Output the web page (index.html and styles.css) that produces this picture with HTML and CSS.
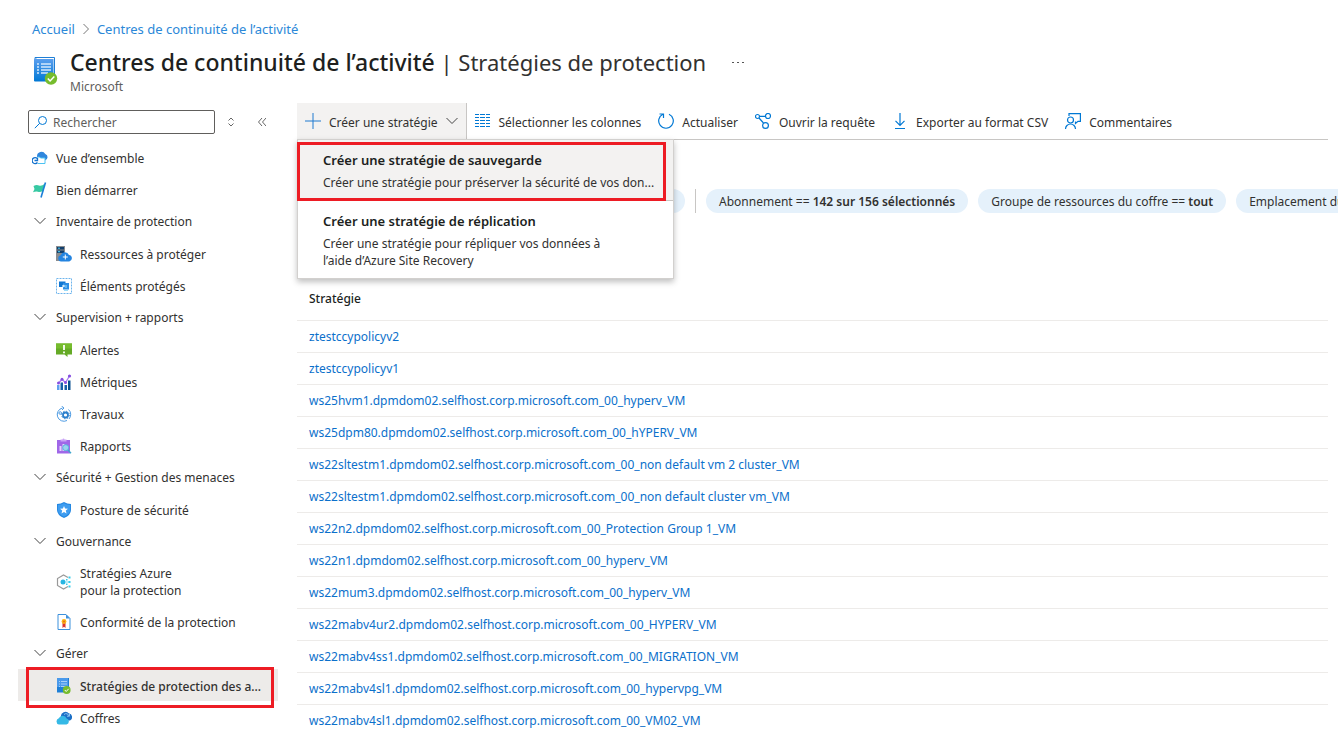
FILE: index.html
```html
<!DOCTYPE html>
<html lang="fr">
<head>
    <meta charset="UTF-8">
    <meta name="viewport" content="width=device-width, initial-scale=1.0">
    <title>Centres de continuité de l’activité</title>
    <link rel="stylesheet" href="styles.css">
</head>
<body>
    <header class="page-header">
        <nav class="breadcrumb" aria-label="Fil d’Ariane">
            <a href="#">Accueil</a>
            <svg class="crumb-arrow" viewBox="0 0 8 12"><path d="M1.500 1l5 5-5 5" fill="none" stroke="#777"/></svg>
            <a href="#">Centres de continuité de l’activité</a>
        </nav>
        <div class="title-row">
            <svg class="title-icon" viewBox="0 0 26 30">
                <defs>
                    <linearGradient id="book" x1="0" y1="0" x2="0" y2="1"><stop offset="0" stop-color="#5ea0ef"/><stop offset="1" stop-color="#0078d4"/></linearGradient>
                </defs>
                <path d="M2 1.500h19.500v23H2z" fill="#fff" stroke="#1f7fd6"/>
                <path d="M1 3.500 3.500 2v1h17v22.500H2a1 1 0 0 1-1-1z" fill="url(#book)"/>
                <path d="M4 8h2M8 8h10M4 11h2M8 11h10M4 14h2M8 14h10M4 17h2M8 17h7" stroke="#d3e8fb" stroke-width="1.300"/>
                <circle cx="18" cy="22.500" r="6.200" fill="#76bc2d"/>
                <path d="m14.800 22.500 2.300 2.500 4.200-4.500" fill="none" stroke="#fff" stroke-width="1.500"/>
            </svg>
            <div class="title-text">
                <h1>Centres de continuité de l’activité<span class="title-sub"> | Stratégies de protection</span></h1>
                <p class="org">Microsoft</p>
            </div>
            <button type="button" class="more-btn" aria-label="Plus d’options">
                <svg viewBox="0 0 12 4"><path d="M0 1.500h2M5 1.500h2M10 1.500h2" stroke="#555"/></svg>
            </button>
        </div>
    </header>

    <div class="layout">
        <aside class="sidebar">
            <div class="search-row">
                <div class="search-box">
                    <svg viewBox="0 0 14 14"><circle cx="8.500" cy="5.500" r="4" fill="none" stroke="#0078d4"/><path d="M5.600 8.400.800 13.200" stroke="#0078d4"/></svg>
                    <input type="text" placeholder="Rechercher" aria-label="Rechercher">
                </div>
                <button type="button" class="icon-btn" aria-label="Tout développer">
                    <svg viewBox="0 0 8 10"><path d="M1.500 3.500 4 1l2.500 2.500M1.500 6.500 4 9l2.500-2.500" fill="none" stroke="#666"/></svg>
                </button>
                <button type="button" class="icon-btn" aria-label="Réduire le menu">
                    <svg viewBox="0 0 8 10"><path d="M4 1 .500 5 4 9M8 1 4.500 5 8 9" fill="none" stroke="#666"/></svg>
                </button>
            </div>

            <nav class="menu" aria-label="Menu">
                <a href="#" class="item">
                    <svg class="icon" viewBox="0 0 16 16"><path d="M5 6.500A4.500 4.500 0 0 1 13.300 4 3.400 3.400 0 0 1 13 10.500H6z" fill="#2f86dd"/><path d="M5.500 7h2l1 1h4.500v5.500H6" fill="#fff" stroke="#4cc3f2"/><path d="M5.300 8.500A3 3 0 1 0 5.500 12.500M2.500 10.500h3V8" fill="none" stroke="#1371cd" stroke-width="1.300"/></svg>
                    <span>Vue d’ensemble</span>
                </a>
                <a href="#" class="item">
                    <svg class="icon" viewBox="0 0 16 16"><path d="M1.500 4q3-1.500 5.500-.500t6-2l-2 7.500q-3 1.500-5 .800-2-.800-5 .500L2.500 7z" fill="#37c9a3"/><path d="M13.500.500 9 15.500" stroke="#1b7fd8" stroke-width="1.600"/></svg>
                    <span>Bien démarrer</span>
                </a>
                <button type="button" class="item group" aria-expanded="true">
                    <svg class="icon" viewBox="0 0 16 16"><path d="m2.500 5 5.500 5.500L13.500 5" fill="none" stroke="#444"/></svg>
                    <span>Inventaire de protection</span>
                </button>
                <a href="#" class="item sub">
                    <svg class="icon" viewBox="0 0 16 16"><path d="M0 0h9v15H0z" fill="#8a8c8f"/><path d="M1 1h7v2.500H1zM1 4.500h7V7H1z" fill="#123f6d"/><path d="M2 2.200h2M2 5.700h2" stroke="#50d5f5"/><path d="M5 15.500a3.200 3.200 0 0 1-.300-6.300 4.500 4.500 0 0 1 8.300-.200 3.300 3.300 0 0 1 .300 6.500z" fill="#2484e0"/><path d="M9.300 8.500v5M6.800 11h5" stroke="#fff"/></svg>
                    <span>Ressources à protéger</span>
                </a>
                <a href="#" class="item sub">
                    <svg class="icon" viewBox="0 0 16 16"><path d="M.500.500h15v15H.500z" fill="#fff" stroke="#6db4ec" stroke-dasharray="2 1"/><path d="M3 3.500h6.500v5.500H3z" fill="#1277d2"/><path d="M7 5h6v6.500H7z" fill="#2c8ee5"/><circle cx="7.500" cy="8" r="1.300" fill="#cfeafc"/><path d="M10 7v3M8 12.500h4" stroke="#9bdcf8"/></svg>
                    <span>Éléments protégés</span>
                </a>
                <button type="button" class="item group" aria-expanded="true">
                    <svg class="icon" viewBox="0 0 16 16"><path d="m2.500 5 5.500 5.500L13.500 5" fill="none" stroke="#444"/></svg>
                    <span>Supervision + rapports</span>
                </button>
                <a href="#" class="item sub">
                    <svg class="icon" viewBox="0 0 16 16"><path d="M0 1.500h16v11h-4.500V15l-3-2.500H0z" fill="#65aa26"/><path d="M0 1.500h16v5H0z" fill="#76bc2d"/><path d="M8 3v5M8 9.500v1.700" stroke="#fff" stroke-width="1.800"/></svg>
                    <span>Alertes</span>
                </a>
                <a href="#" class="item sub">
                    <svg class="icon" viewBox="0 0 16 16"><path d="M1 11h2.500v5H1z" fill="#5ea0ef"/><path d="M4.500 8.500H7V16H4.500zM8.500 11H11v5H8.500z" fill="#155fa8"/><path d="M12 6.500h2.500V16H12z" fill="#0a5090"/><path d="M2.500 9 6 5.500l3.500 3L13.500 2" fill="none" stroke="#a67af4" stroke-width="1.300"/><g fill="#864ee0"><circle cx="2.500" cy="9" r="1.500"/><circle cx="6" cy="5.300" r="1.500"/><circle cx="9.500" cy="8.500" r="1.500"/><circle cx="13.500" cy="2" r="1.600"/></g></svg>
                    <span>Métriques</span>
                </a>
                <a href="#" class="item sub">
                    <svg class="icon" viewBox="0 0 16 16"><path d="M6.500 2A6.700 6.700 0 1 0 11 14.500M12.500 3.500a6.700 6.700 0 0 1 .500 9.500" fill="none" stroke="#4d9be3"/><path d="M5.500 0 8 2 6 4" fill="none" stroke="#4d9be3"/><circle cx="9.500" cy="9" r="2.500" fill="#fff" stroke="#2b7fcc" stroke-width="1.800"/><circle cx="9.500" cy="9" r="3.800" fill="none" stroke="#2b7fcc" stroke-dasharray="1.500 1.480"/><circle cx="4.200" cy="7" r="1.300" fill="none" stroke="#4d9be3"/></svg>
                    <span>Travaux</span>
                </a>
                <a href="#" class="item sub">
                    <svg class="icon" viewBox="0 0 16 16"><path d="M1 2h13v13.500H1z" fill="#a067e8"/><path d="M4.500 1.500h2a1 1 0 0 1 2 0h2v2h-6z" fill="#c9a4f5"/><path d="M3.500 8h2v5h-2zM6.500 6h2v7h-2z" fill="#e5d4fb"/><circle cx="9.700" cy="9.700" r="3" fill="#9ad3ee" stroke="#58b5dd"/><path d="m12 12 3 3.200" stroke="#3ea6cf" stroke-width="1.400"/></svg>
                    <span>Rapports</span>
                </a>
                <button type="button" class="item group" aria-expanded="true">
                    <svg class="icon" viewBox="0 0 16 16"><path d="m2.500 5 5.500 5.500L13.500 5" fill="none" stroke="#444"/></svg>
                    <span>Sécurité + Gestion des menaces</span>
                </button>
                <a href="#" class="item sub">
                    <svg class="icon" viewBox="0 0 16 16"><path d="M8 0q3 2 7 2v6q0 5-7 8-7-3-7-8V2q4 0 7-2z" fill="#2488e2"/><path d="M8 1.200q2.500 1.600 6 1.800v5q0 4-6 6.800Q2 12 2 8V3q3.500-.200 6-1.800z" fill="#3f9df0"/><path d="m8 4 1.100 2.600 2.900.200-2.200 1.800.700 2.900L8 10l-2.500 1.500.700-2.900L4 6.800l2.900-.200z" fill="#fff"/></svg>
                    <span>Posture de sécurité</span>
                </a>
                <button type="button" class="item group" aria-expanded="true">
                    <svg class="icon" viewBox="0 0 16 16"><path d="m2.500 5 5.500 5.500L13.500 5" fill="none" stroke="#444"/></svg>
                    <span>Gouvernance</span>
                </button>
                <a href="#" class="item sub two-lines">
                    <svg class="icon" viewBox="0 0 16 16"><path d="M12 3.500 7.500 1 1.500 4.500v7l6 3.500 4.500-2.500" fill="none" stroke="#999" stroke-width="1.200"/><circle cx="7" cy="8" r="2.500" fill="#28b5e2"/><path d="M9 8h4" stroke="#7edcf2"/><path d="M12.500 2.500h2v2h-2zM12.500 7h2v2h-2zM12.500 11.500h2v2h-2zM10 5h1.500v1.500H10zM10 9.500h1.500V11H10z" fill="#38cdea"/></svg>
                    <span>Stratégies Azure<br>pour la protection</span>
                </a>
                <a href="#" class="item sub">
                    <svg class="icon" viewBox="0 0 16 16"><path d="M2 .500h8l4 4v11H2z" fill="#fff" stroke="#3c91dc"/><path d="M10 .500v4h4z" fill="#3c91dc"/><path d="M6.500 9h3v5L8 12.700 6.500 14z" fill="#d9342b"/><circle cx="8" cy="7.500" r="2.400" fill="#fcb516"/><circle cx="8" cy="7.500" r="1" fill="#e66b12"/></svg>
                    <span>Conformité de la protection</span>
                </a>
                <button type="button" class="item group" aria-expanded="true">
                    <svg class="icon" viewBox="0 0 16 16"><path d="m2.500 5 5.500 5.500L13.500 5" fill="none" stroke="#444"/></svg>
                    <span>Gérer</span>
                </button>
                <a href="#" class="item sub selected" aria-current="page">
                    <svg class="icon" viewBox="0 0 16 16"><path d="M1 0h12v14.500H1z" fill="#1f7fd6"/><path d="M1 0h11v9H1z" fill="#4b9aeb"/><path d="M3 3.500h1M5 3.500h6M3 6h1M5 6h6M3 8.500h1M5 8.500h6" stroke="#a9d0f5"/><circle cx="10.700" cy="12" r="3.900" fill="#76bc2d"/><path d="m8.800 12 1.400 1.500 2.500-2.700" fill="none" stroke="#fff"/></svg>
                    <span>Stratégies de protection des a...</span>
                    <i class="callout"></i>
                </a>
                <a href="#" class="item sub">
                    <svg class="icon" viewBox="0 0 16 16"><path d="M5 7A4.500 4.500 0 0 1 13 3.500 3.700 3.700 0 0 1 14 10.500H8z" fill="#1b6fc6"/><path d="M8 4.500a3 3 0 0 1 5 1.500M13.500 3.500v2.700h-2.500" fill="none" stroke="#8cc4f2"/><path d="M3 14.500a3.200 3.200 0 0 1-.200-6.200 4.200 4.200 0 0 1 7.800.200A3.100 3.100 0 0 1 10.500 14.500z" fill="#35b9e6"/></svg>
                    <span>Coffres</span>
                </a>
            </nav>
        </aside>

        <main class="content">
            <div class="toolbar">
                <button type="button" class="tool create" aria-expanded="true">
                    <svg class="icon" viewBox="0 0 16 16"><path d="M8 0v16M0 8h16" stroke="#1f7bd0"/></svg>
                    <span>Créer une stratégie</span>
                    <svg class="caret" viewBox="0 0 12 12"><path d="M.500 3 6 8.500 11.500 3" fill="none" stroke="#444"/></svg>
                </button>
                <button type="button" class="tool">
                    <svg class="icon" viewBox="0 0 16 16"><path d="M0 1.500h16M0 4.500h16M0 7.500h16M0 10.500h16M0 13.500h16" stroke="#0078d4" stroke-dasharray="4 1 5 1"/></svg>
                    <span>Sélectionner les colonnes</span>
                </button>
                <button type="button" class="tool">
                    <svg class="icon" viewBox="0 0 16 16"><path d="M11 1.300a7.300 7.300 0 1 1-6 0M1.500 1h4v4" fill="none" stroke="#0078d4" stroke-width="1.200"/></svg>
                    <span>Actualiser</span>
                </button>
                <button type="button" class="tool">
                    <svg class="icon" viewBox="0 0 16 16"><g fill="none" stroke="#0078d4" stroke-width="1.200"><circle cx="2.500" cy="3.500" r="2"/><circle cx="13" cy="3" r="2.500"/><circle cx="10.500" cy="12.500" r="2.900"/><path d="M4.500 3.400h6M4 5l4.500 5"/></g></svg>
                    <span>Ouvrir la requête</span>
                </button>
                <button type="button" class="tool">
                    <svg class="icon" viewBox="0 0 16 16"><path d="M8 0v12M3.500 7.800 8 12.300l4.500-4.500M3 15.500h10" fill="none" stroke="#0078d4" stroke-width="1.200"/></svg>
                    <span>Exporter au format CSV</span>
                </button>
                <button type="button" class="tool">
                    <svg class="icon" viewBox="0 0 16 16"><g fill="none" stroke="#0078d4" stroke-width="1.200"><circle cx="5.500" cy="7" r="3"/><path d="M.500 16a5 5 0 0 1 10 0M4 3V.600h11.400v7.800H13l-2.500 2V8.400"/></g></svg>
                    <span>Commentaires</span>
                </button>

                <div class="dropdown" role="menu">
                    <button type="button" class="option active" role="menuitem">
                        <strong>Créer une stratégie de sauvegarde</strong>
                        <span>Créer une stratégie pour préserver la sécurité de vos don...</span>
                        <i class="callout"></i>
                    </button>
                    <button type="button" class="option" role="menuitem">
                        <strong>Créer une stratégie de réplication</strong>
                        <span>Créer une stratégie pour répliquer vos données à<br>l’aide d’Azure Site Recovery</span>
                    </button>
                </div>
            </div>

            <div class="filters">
                <span class="pill first"></span>
                <span class="divider"></span>
                <button type="button" class="pill">Abonnement == <b>142 sur 156 sélectionnés</b></button>
                <button type="button" class="pill">Groupe de ressources du coffre == <b>tout</b></button>
                <button type="button" class="pill">Emplacement du coffre == <b>tout</b></button>
            </div>

            <table class="policies">
                <thead>
                    <tr><th scope="col">Stratégie</th></tr>
                </thead>
                <tbody>
                    <tr><td><a href="#">ztestccypolicyv2</a></td></tr>
                    <tr><td><a href="#">ztestccypolicyv1</a></td></tr>
                    <tr><td><a href="#">ws25hvm1.dpmdom02.selfhost.corp.microsoft.com_00_hyperv_VM</a></td></tr>
                    <tr><td><a href="#">ws25dpm80.dpmdom02.selfhost.corp.microsoft.com_00_hYPERV_VM</a></td></tr>
                    <tr><td><a href="#">ws22sltestm1.dpmdom02.selfhost.corp.microsoft.com_00_non default vm 2 cluster_VM</a></td></tr>
                    <tr><td><a href="#">ws22sltestm1.dpmdom02.selfhost.corp.microsoft.com_00_non default cluster vm_VM</a></td></tr>
                    <tr><td><a href="#">ws22n2.dpmdom02.selfhost.corp.microsoft.com_00_Protection Group 1_VM</a></td></tr>
                    <tr><td><a href="#">ws22n1.dpmdom02.selfhost.corp.microsoft.com_00_hyperv_VM</a></td></tr>
                    <tr><td><a href="#">ws22mum3.dpmdom02.selfhost.corp.microsoft.com_00_hyperv_VM</a></td></tr>
                    <tr><td><a href="#">ws22mabv4ur2.dpmdom02.selfhost.corp.microsoft.com_00_HYPERV_VM</a></td></tr>
                    <tr><td><a href="#">ws22mabv4ss1.dpmdom02.selfhost.corp.microsoft.com_00_MIGRATION_VM</a></td></tr>
                    <tr><td><a href="#">ws22mabv4sl1.dpmdom02.selfhost.corp.microsoft.com_00_hypervpg_VM</a></td></tr>
                    <tr><td><a href="#">ws22mabv4sl1.dpmdom02.selfhost.corp.microsoft.com_00_VM02_VM</a></td></tr>
                </tbody>
            </table>
        </main>
    </div>
</body>
</html>
```
FILE: styles.css
```css
* {
    box-sizing: border-box;
}
body {
    margin: 0;
    font-family: "Segoe UI", "Noto Sans", sans-serif;
    font-size: 12px;
    line-height: 17px;
    color: #323130;
    background: #fff;
    overflow: hidden;
}
a {
    color: #0b70cb;
    text-decoration: none;
}
button {
    font: inherit;
    color: inherit;
    background: none;
    border: none;
    padding: 0;
    text-align: left;
    cursor: pointer;
}
svg {
    flex: none;
    display: block;
}

/* Header */
.page-header {
    height: 103px;
    padding: 20px 32px 0;
}
.breadcrumb {
    display: flex;
    align-items: center;
    gap: 7px;
    height: 18px;
    font-size: 13px;
}
.breadcrumb a {
    color: #2b88d8;
}
.crumb-arrow {
    width: 8px;
    height: 12px;
}
.title-row {
    display: flex;
    margin-top: 9px;
}
.title-icon {
    width: 26px;
    height: 30px;
    margin: 9px 11px 0 1px;
}
h1 {
    margin: 0;
    font-size: 23px;
    line-height: 31px;
    font-weight: 500;
    color: #201f1e;
    white-space: nowrap;
}
.title-sub {
    font-size: 22px;
    font-weight: 400;
    color: #323130;
}
.org {
    margin: 0;
    color: #605e5c;
}
.more-btn {
    height: 32px;
    margin-left: 26px;
}
.more-btn svg {
    width: 12px;
    height: 4px;
}

/* Layout */
.layout {
    display: flex;
}
.sidebar {
    flex: none;
    width: 297px;
    padding-left: 18px;
}
.search-row {
    display: flex;
    align-items: center;
    height: 38px;
    padding-left: 10px;
}
.search-box {
    display: flex;
    align-items: center;
    gap: 5px;
    width: 187px;
    height: 24px;
    padding: 0 5px;
    border: 1px solid #605e5c;
    border-radius: 2px;
}
.search-box svg {
    width: 14px;
    height: 14px;
}
.search-box input {
    flex: 1;
    min-width: 0;
    padding: 0;
    border: none;
    outline: none;
    font: inherit;
    background: none;
}
.search-box input::placeholder {
    color: #605e5c;
    opacity: 1;
}
.icon-btn {
    display: flex;
    justify-content: center;
    width: 31px;
}
.icon-btn svg {
    width: 8px;
    height: 10px;
}
.menu {
    width: 260px;
}
.item {
    position: relative;
    display: flex;
    align-items: center;
    gap: 8px;
    width: 100%;
    height: 32px;
    padding-top: 2px;
    padding-left: 14px;
    color: #323130;
    white-space: nowrap;
}
.item.group {
    padding-top: 0;
}
.item.sub {
    padding-left: 38px;
}
.item.two-lines {
    height: 48px;
}
.item.selected {
    background: #edebe9;
    font-weight: 500;
}
.icon {
    width: 16px;
    height: 16px;
}

/* Red frame drawn around the highlighted entries */
.callout {
    position: absolute;
    border: 3px solid #ed1c24;
    pointer-events: none;
}
.selected .callout {
    top: -2px;
    right: 4px;
    bottom: -7px;
    left: 8px;
}
.option .callout {
    top: 2px;
    right: 7px;
    bottom: -1px;
    left: -1px;
    z-index: 1;
}

/* Toolbar */
.content {
    flex: 1;
    min-width: 0;
}
.toolbar {
    position: relative;
    display: flex;
    gap: 17px;
    height: 37px;
    margin-right: 10px;
    border-bottom: 1px solid #c8c6c4;
}
.tool {
    display: flex;
    align-items: center;
    gap: 8px;
    padding-top: 2px;
    white-space: nowrap;
}
.tool.create {
    padding: 2px 8px 0;
    margin-right: -9px;
    background: #f3f2f1;
    border-right: 1px solid #c8c6c4;
}
.tool .icon {
    margin-bottom: 2px;
}
.caret {
    width: 12px;
    height: 12px;
    margin-bottom: 2px;
}
.dropdown {
    position: absolute;
    top: 36px;
    left: 0;
    width: 377px;
    background: #fff;
    border: 1px solid #d2d0ce;
    box-shadow: 0 3px 6px rgba(0, 0, 0, 0.25);
}
.option {
    position: relative;
    display: block;
    width: 100%;
    padding: 12px 8px 9px 25px;
}
.option + .option {
    border-top: 1px solid #c8c6c4;
}
.option.active {
    background: #f3f2f1;
}
.option strong,
.option span {
    display: block;
    white-space: nowrap;
}
.option strong {
    margin-bottom: 5px;
    font-size: 13px;
    font-weight: 600;
    color: #201f1e;
}

/* Filters */
.filters {
    display: flex;
    align-items: center;
    gap: 10px;
    margin-top: 49px;
    overflow: hidden;
}
.pill {
    flex: none;
    height: 24px;
    padding: 0 13px;
    border-radius: 12px;
    background: #e5f1fb;
    white-space: nowrap;
}
.pill b {
    font-weight: 600;
}
.pill.first {
    width: 388px;
}
.divider {
    flex: none;
    width: 1px;
    height: 24px;
    background: #c8c6c4;
}

/* Table */
.policies {
    width: calc(100% - 10px);
    margin-top: 63px;
    border-collapse: collapse;
}
.policies th,
.policies td {
    height: 32px;
    padding: 0 12px;
    border-bottom: 1px solid #edebe9;
    text-align: left;
}
.policies th {
    height: 44px;
    padding-top: 2px;
    font-weight: 500;
    color: #201f1e;
}
```
